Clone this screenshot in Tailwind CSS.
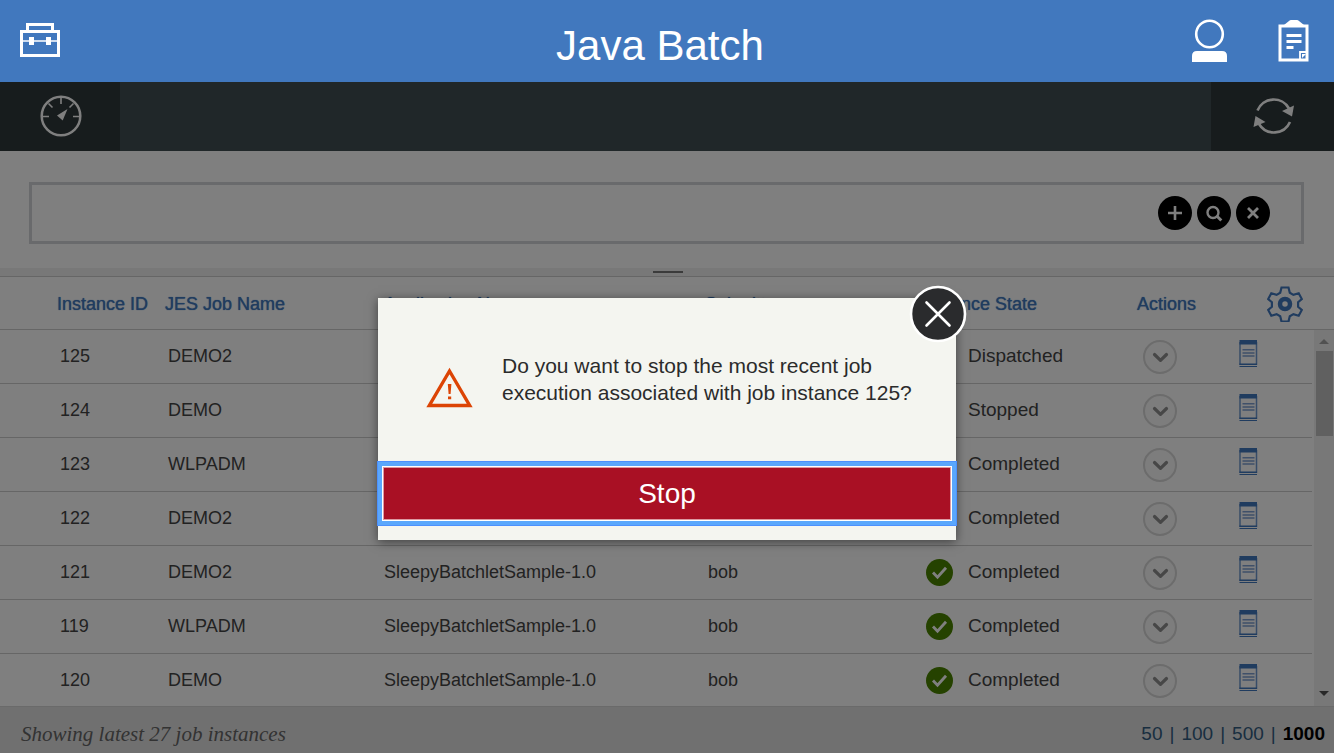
<!DOCTYPE html>
<html lang="en">
<head>
<meta charset="utf-8">
<title>Java Batch</title>
<script src="https://cdn.jsdelivr.net/npm/@tailwindcss/browser@4"></script>
</head>
<body class="h-screen overflow-hidden flex flex-col bg-white font-['Liberation_Sans',Arial,sans-serif] text-[18px] text-[#444]">
<svg class="hidden">
  <symbol id="check" viewBox="0 0 28 28"><circle cx="13.5" cy="13.5" r="13.5" fill="#4b8400"/><path d="M7 13.500l4.500 4.700L20 8.700" fill="none" stroke="#fff" stroke-width="2.8"/></symbol>
  <symbol id="chev" viewBox="0 0 34 34"><circle cx="17" cy="17" r="16" fill="#fafafa" stroke="#d8d8d8" stroke-width="2"/><path d="M11.5 14.5l6 5.8 6-5.8" fill="none" stroke="#8e8e8e" stroke-width="3.2" stroke-linecap="round" stroke-linejoin="round"/></symbol>
  <symbol id="doc" viewBox="0 0 19 28"><path d="M1 2v23M17.5 2v23" stroke="#6f99d0" stroke-width="1.500"/><path d="M.5 0h17.500v4.500H.5zM.5 23.500h17.500v1.500H.5zM.5 26h17.500v1H.5z" fill="#4178be"/><path d="M3.500 9.800h12M3.500 13h12M3.500 16h12" stroke="#7ea0d2" stroke-width="1.600"/></symbol>
</svg>

<header class="h-[82px] shrink-0 bg-[#4178be] grid grid-cols-[1fr_auto_1fr] items-center text-white">
  <button class="ml-[19px] mb-[2px] justify-self-start" aria-label="Toolbox">
    <svg class="block" width="42" height="36" viewBox="0 0 42 36" fill="none" stroke="#fff" stroke-width="3"><path d="M8.500 9V2.500h25V9M2.500 9.500h37v24h-37z"/><path d="M3 19h37" stroke-width="1.500"/><path d="M10 15h5v8h-5zM27 15h5v8h-5z" fill="#fff" stroke="none"/></svg>
  </button>
  <h1 class="text-[42px] leading-[48px] pt-[9px] pr-[14px]">Java Batch</h1>
  <div class="flex items-center justify-end gap-[50px] pr-[25px]">
    <button aria-label="User"><svg class="block" width="37" height="44" viewBox="0 0 37 44"><circle cx="18.500" cy="15" r="13.300" fill="none" stroke="#fff" stroke-width="2.600"/><path d="M1 43v-6q0-5 5-5h25q5 0 5 5v6z" fill="#fff"/></svg></button>
    <button aria-label="Tasks"><svg class="block" width="31" height="44" viewBox="0 0 31 44"><path d="M2 7h27v34H2z" fill="none" stroke="#fff" stroke-width="3"/><path d="M6 8V6l5-4q1-1 2-1h6q1 0 2 1l5 4v2z" fill="#fff"/><path d="M8.500 16.500h15M8.500 22.500h15M8.500 28.500h7" stroke="#fff" stroke-width="3"/><path d="M22 41v-8h7" fill="none" stroke="#fff" stroke-width="1.800"/><path d="M24 39v-4h4z" fill="#fff"/></svg></button>
  </div>
</header>

<main class="relative flex-1 min-h-0 flex flex-col">
  <nav class="h-[69px] shrink-0 flex justify-between bg-[#404e53]">
    <button class="w-[120px] bg-[#2e383a] flex items-center justify-center pl-[2px] pb-[2px]" aria-label="Dashboard">
      <svg width="42" height="42" viewBox="0 0 42 42" fill="none" stroke="#fff"><circle cx="21" cy="21" r="19.300" stroke-width="2.500"/><path d="M21 3v6M3 21.500h6M39 21.500h-6M8.500 8.500l4 4M33.500 8.500l-4 4" stroke-width="1.600"/><path d="M27.500 14l-4.800 11.500L17 20.500z" fill="#fff" stroke="none"/></svg>
    </button>
    <button class="w-[123px] bg-[#2e383a] flex items-center justify-center pl-[2px] pb-[2px]" aria-label="Refresh">
      <svg width="42" height="42" viewBox="0 0 42 42" fill="none" stroke="#fff" stroke-width="2.600"><path d="M4.500 15.500A17.500 17.500 0 0 1 36 13.500"/><path d="M37 27A17.500 17.500 0 0 1 6 29"/><path d="M29 16l12-5.500-2 11zM.500 32L2.500 21l10 6z" fill="#fff" stroke="none"/></svg>
    </button>
  </nav>

  <section class="shrink-0 pl-[29px] pr-[30px] pt-[31px] pb-6">
    <div class="h-[62px] border-3 border-[#d3d5d8] flex items-center gap-[5px] pr-[31px]">
      <input type="text" aria-label="Search job instances" class="flex-1 h-full px-3 outline-none">
      <button aria-label="Add criteria"><svg class="block" width="34" height="34" viewBox="0 0 34 34"><circle cx="17" cy="17" r="17"/><path d="M10 17h14M17 10v14" stroke="#fff" stroke-width="2.600"/></svg></button>
      <button aria-label="Search"><svg class="block" width="34" height="34" viewBox="0 0 34 34" fill="none" stroke="#fff"><circle cx="17" cy="17" r="17" fill="#000" stroke="none"/><circle cx="16" cy="16.500" r="5.500" stroke-width="2.400"/><path d="M19.800 20l4.500 4.500" stroke-width="3"/></svg></button>
      <button aria-label="Clear"><svg class="block" width="34" height="34" viewBox="0 0 34 34"><circle cx="17" cy="17" r="17"/><path d="M12 12l10 10M22 12L12 22" stroke="#fff" stroke-width="2.800"/></svg></button>
    </div>
  </section>
  <div class="h-2 shrink-0 bg-[#f0f0f0] flex justify-center items-center pl-[2px]"><span class="w-[30px] h-[2px] bg-[#777]"></span></div>

  <div class="relative flex-1 min-h-0 overflow-hidden border-t border-[#ccc]">
    <table class="w-full table-fixed border-separate border-spacing-0 text-left">
      <colgroup><col class="w-[165px]"><col class="w-[216px]"><col class="w-[324px]"><col class="w-[217px]"><col class="w-[215px]"><col class="w-[85px]"><col class="w-[90px]"><col class="w-[22px]"></colgroup>
      <thead class="text-[#4178be] [&_th]:h-[53px] [&_th]:p-0 [&_th]:pt-[2px] [&_th]:font-normal [&_th]:border-b [&_th]:border-[#ccc] [text-shadow:0_0_1px_#4178be]">
        <tr><th><span class="pl-[57px]">Instance ID</span></th><th>JES Job Name</th><th><span class="pl-[3px]">Application Name</span></th><th>Submitter</th><th>Instance State</th><th>Actions</th>
        <th><button class="block ml-[45px]" aria-label="Column settings"><svg class="block" width="36" height="36" viewBox="0 0 36 36" fill="none" stroke="#4178be"><path d="M14.500 1.500h7l1.300 5.300 3.600 2.100 5.300-1.600 3.100 5.700-3.700 3.300v4.400l3.700 3.300-3.100 5.700-5.300-1.600-3.600 2.100-1.300 5.300h-7l-1.300-5.300-3.600-2.100-5.300 1.600L1.200 24l3.700-3.300v-4.400L1.200 13l3.100-5.700 5.300 1.600 3.600-2.100z" stroke-width="2.200"/><circle cx="18" cy="18" r="5" stroke-width="4.500"/></svg></button></th><th></th></tr>
      </thead>
      <tbody id="rows"></tbody>
    </table>
    <div class="absolute right-0 top-[53px] bottom-0 w-5 bg-[#f1f1f1]">
      <svg class="absolute left-[5px] top-[9px]" width="10" height="5"><path d="M0 5l5-5 5 5z" fill="#a3a3a3"/></svg>
      <div class="absolute left-[2px] top-[21px] w-[17px] h-[85px] bg-[#c1c1c1]"></div>
      <svg class="absolute left-[5px] bottom-[10px]" width="10" height="5"><path d="M0 0l5 5 5-5z" fill="#505050"/></svg>
    </div>
  </div>

  <footer class="h-[47px] shrink-0 bg-[#e0e0e0] border-t border-[#d4d4d4] flex items-center justify-between pl-[21px] pr-[9px] pt-[9px]">
    <p class="font-['Liberation_Serif',serif] italic text-[21px] text-[#666]">Showing latest 27 job instances</p>
    <div class="flex gap-[7px] text-[19px] text-[#325c80]"><a href="#">50</a><span>|</span><a href="#">100</a><span>|</span><a href="#">500</a><span>|</span><a href="#" class="font-bold text-black">1000</a></div>
  </footer>

  <div class="absolute inset-0 bg-black/50"></div>

  <div role="dialog" aria-modal="true" aria-label="Stop job" class="absolute left-1/2 -translate-x-1/2 top-[216px] w-[578px] bg-[#f4f5f0] shadow-[0_2px_10px_rgba(0,0,0,0.5)] pb-[19px]">
    <button class="absolute -right-[11px] -top-[13px] size-[58px]" aria-label="Close"><svg width="58" height="58" viewBox="0 0 58 58"><circle cx="29" cy="29" r="27" fill="#2a2b2d" stroke="#fff" stroke-width="2.600"/><path d="M17.500 17.500l23 23M40.500 17.500l-23 23" stroke="#fff" stroke-width="2.600" stroke-linecap="round"/></svg></button>
    <div class="h-[168px] flex pt-[54px] pl-[48px] gap-[29px]">
      <svg class="mt-[15px] shrink-0" width="47" height="41" viewBox="0 0 47 41"><path d="M23.500 4L43.700 38.500H3.300z" fill="none" stroke="#dc4405" stroke-width="3.400"/><path d="M21.800 17h3.600l-.8 10h-2zM22 29.500h3.200v2.800H22z" fill="#dc4405"/></svg>
      <p class="text-[21px] leading-[27px] text-[#2b2b2b]">Do you want to stop the most recent job<br>execution associated with job instance 125?</p>
    </div>
    <div class="px-1"><button class="block w-full h-[55px] bg-[#a91024] border border-white text-white text-[28px] leading-[32px] shadow-[inset_0_0_0_1px_#dc9aa2,0_0_0_4px_#5aa7fc,0_0_0_5px_#4d90fe]">Stop</button></div>
  </div>
</main>

<script>
const jobs = [[125,'DEMO2','Dispatched'],[124,'DEMO','Stopped'],[123,'WLPADM','Completed'],[122,'DEMO2','Completed'],[121,'DEMO2','Completed'],[119,'WLPADM','Completed'],[120,'DEMO','Completed']];
document.getElementById('rows').innerHTML = jobs.map(([id,name,state]) => `
<tr class="[&>td]:h-[54px] [&>td]:p-0 [&>td:not(:last-child)]:border-b [&>td]:border-[#ccc]">
<td><span class="pl-[60px]">${id}</span></td><td><span class="pl-[3px]">${name}</span></td><td><span class="pl-[3px]">SleepyBatchletSample-1.0</span></td><td><span class="pl-[3px]">bob</span></td>
<td><div class="flex items-center gap-[14px] pl-1 text-[19px]"><svg width="28" height="28"><use href="#check"/></svg>${state}</div></td>
<td><button class="block ml-[6px] mt-px" aria-label="Actions for ${id}"><svg class="block" width="34" height="34"><use href="#chev"/></svg></button></td>
<td><button class="block ml-[17px] mb-[6px]" aria-label="Log for ${id}"><svg class="block" width="19" height="28"><use href="#doc"/></svg></button></td><td></td></tr>`).join('');
</script>
</body>
</html>
